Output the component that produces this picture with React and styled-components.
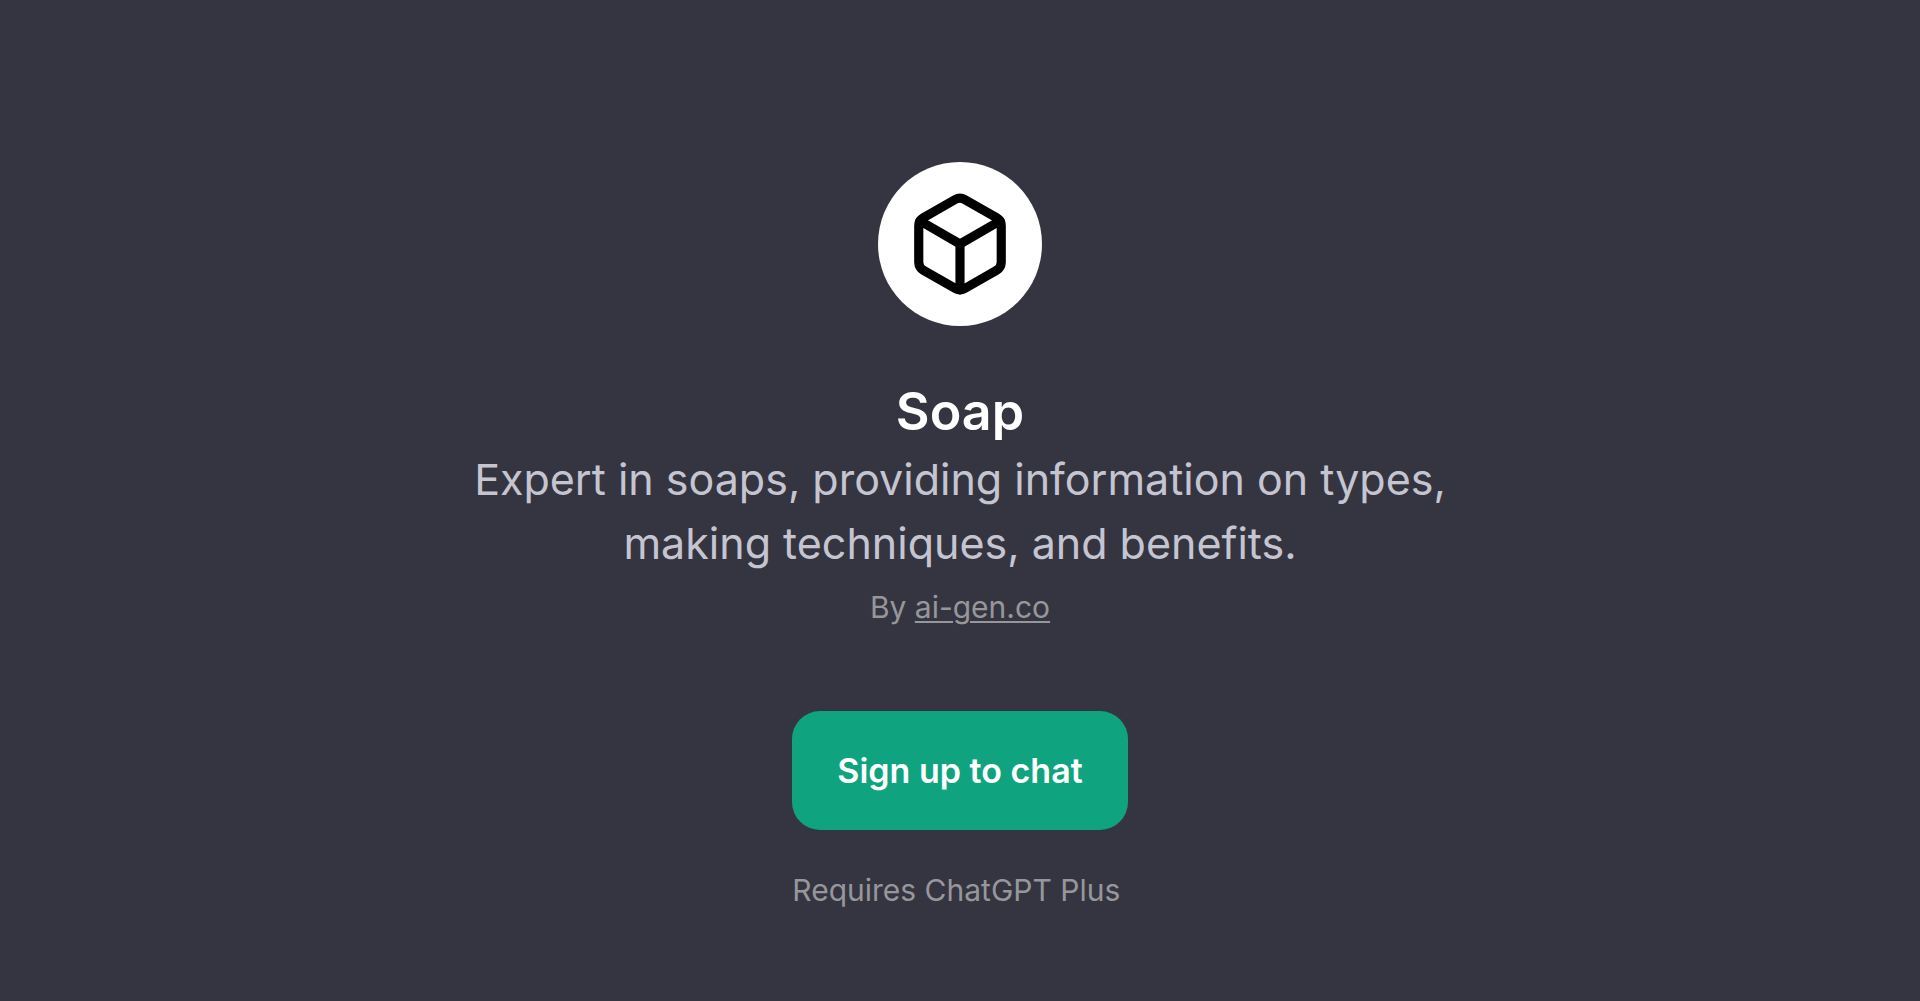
import React from 'react'
import styled, { createGlobalStyle } from 'styled-components'

const App = () => (
  <>
    <GlobalStyle />
    <Page>
      <Avatar>
        <BoxIcon viewBox="0 0 24 24" aria-hidden="true">
          <path d="M21 16V8a2 2 0 0 0-1-1.73l-7-4a2 2 0 0 0-2 0l-7 4A2 2 0 0 0 3 8v8a2 2 0 0 0 1 1.73l7 4a2 2 0 0 0 2 0l7-4A2 2 0 0 0 21 16z" />
          <path d="M3.27 6.96 12 12.01l8.73-5.05" />
          <path d="M12 22V12" />
        </BoxIcon>
      </Avatar>
      <Title>Soap</Title>
      <Description>
        Expert in soaps, providing information on types, making techniques, and benefits.
      </Description>
      <Author>
        By <AuthorLink href="#">ai-gen.co</AuthorLink>
      </Author>
      <Actions>
        <SignUpButton type="button">Sign up to chat</SignUpButton>
        <Note>Requires ChatGPT Plus</Note>
      </Actions>
    </Page>
  </>
)

const GlobalStyle = createGlobalStyle`
  * {
    box-sizing: border-box;
  }
  body {
    margin: 0;
    background-color: #353541;
    font-family: 'Inter', sans-serif;
  }
`

const Page = styled.main`
  display: flex;
  flex-direction: column;
  align-items: center;
  min-height: 100vh;
  padding: 162px 32px 64px;
`

const Avatar = styled.div`
  display: flex;
  align-items: center;
  justify-content: center;
  width: 164px;
  height: 164px;
  border-radius: 50%;
  background-color: #ffffff;
`

const BoxIcon = styled.svg`
  width: 110px;
  height: 110px;
  fill: none;
  stroke: #000000;
  stroke-width: 2;
  stroke-linecap: round;
  stroke-linejoin: round;
`

const Title = styled.h1`
  margin: 54px 0 0;
  font-size: 52px;
  font-weight: 600;
  line-height: 64px;
  color: #ffffff;
`

const Description = styled.p`
  max-width: 1040px;
  margin: 3px 0 0;
  font-size: 43px;
  line-height: 64px;
  text-align: center;
  color: #c5c5d2;
`

const Author = styled.p`
  margin: 12px 0 0;
  font-size: 30px;
  line-height: 40px;
  color: #97979b;
`

const AuthorLink = styled.a`
  color: inherit;
  text-decoration: underline;
  text-decoration-thickness: 2px;
  text-underline-offset: 3px;
`

const Actions = styled.div`
  display: flex;
  flex-direction: column;
  align-items: flex-start;
  margin-top: 84px;
`

const SignUpButton = styled.button`
  padding: 36px 45px;
  border: none;
  border-radius: 28px;
  background-color: #10a37f;
  color: #ffffff;
  font-family: inherit;
  font-size: 34px;
  font-weight: 600;
  line-height: 47px;
  cursor: pointer;
`

const Note = styled.p`
  margin: 40px 0 0;
  font-size: 30px;
  line-height: 40px;
  color: #97979b;
`

export default App
